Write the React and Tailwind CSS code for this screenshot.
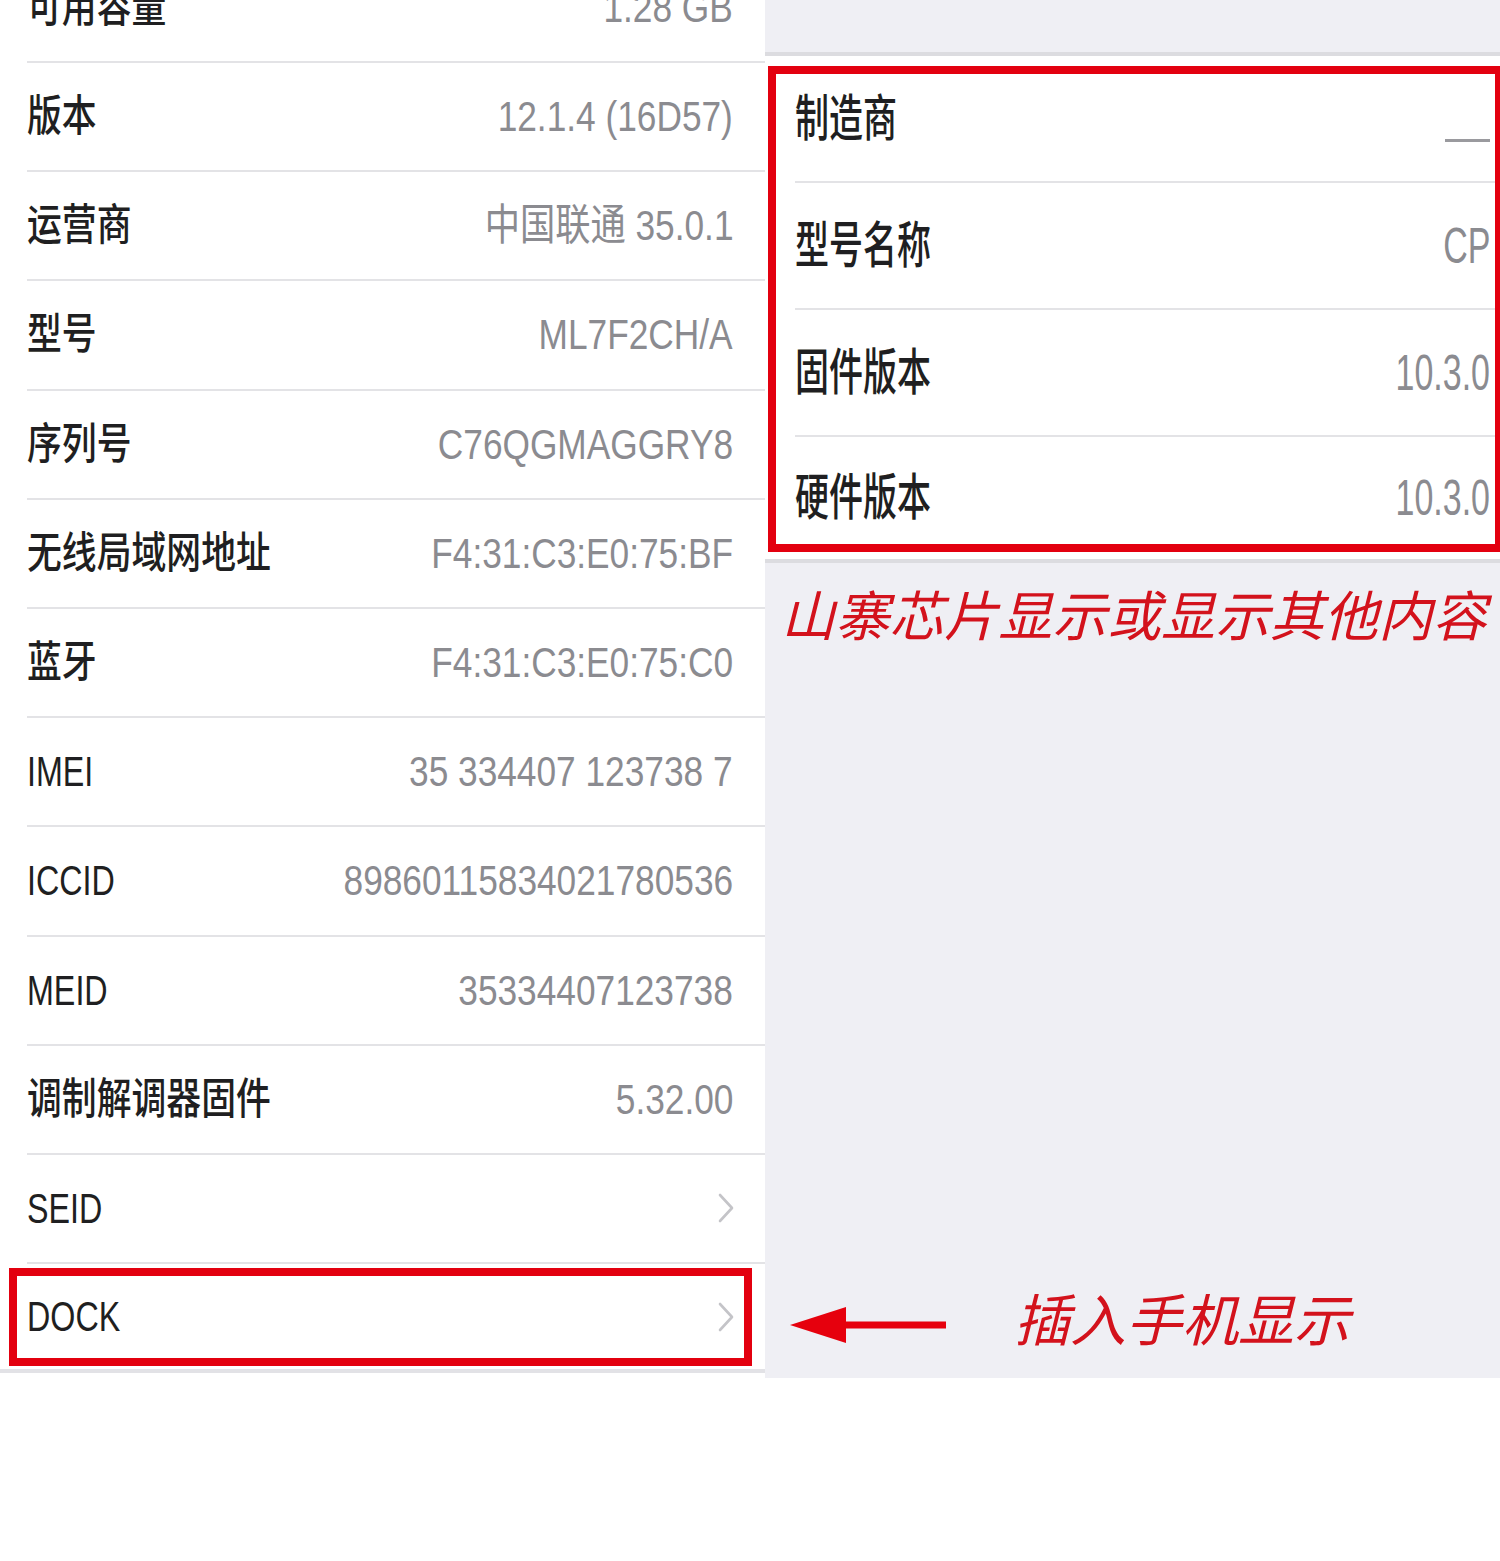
import React from "react";

const leftRows = [
  ["可用容量", "1.28 GB"],
  ["版本", "12.1.4 (16D57)"],
  ["运营商", "中国联通 35.0.1"],
  ["型号", "ML7F2CH/A"],
  ["序列号", "C76QGMAGGRY8"],
  ["无线局域网地址", "F4:31:C3:E0:75:BF"],
  ["蓝牙", "F4:31:C3:E0:75:C0"],
  ["IMEI", "35 334407 123738 7"],
  ["ICCID", "89860115834021780536"],
  ["MEID", "35334407123738"],
  ["调制解调器固件", "5.32.00"],
  ["SEID", null],
  ["DOCK", null],
];

const rightRows = [
  ["制造商", "—"],
  ["型号名称", "CP"],
  ["固件版本", "10.3.0"],
  ["硬件版本", "10.3.0"],
];

const FONT = "font-['Liberation_Sans','Noto_Sans_CJK_SC',sans-serif]";

function Chevron() {
  return (
    <svg width="16" height="30" viewBox="0 0 16 30" fill="none">
      <polyline points="2,2 14,15 2,28" stroke="#c4c4c8" strokeWidth="2.6" strokeLinecap="round" strokeLinejoin="round" />
    </svg>
  );
}

function LeftRow({ label, value, last }) {
  const latin = /^[A-Z]+$/.test(label);
  return (
    <div className={`relative h-[109.2px] shrink-0 ${last ? "border-b-[4px] border-[#e2e2e6]" : "pl-[27px]"}`}>
      <div
        className={`flex h-full items-center justify-between pr-[32px] ${last ? "pl-[27px]" : "border-b-2 border-[#e3e3e6]"}`}
      >
        <span
          className={`inline-block origin-left whitespace-nowrap text-[43px] font-medium leading-none text-[#1f1f21] ${
            latin ? "scale-x-[0.75]" : "scale-x-[0.81]"
          }`}
        >
          {label}
        </span>
        {value !== null ? (
          <span className="inline-block origin-right scale-x-[0.82] whitespace-nowrap text-[43px] leading-none text-[#8b8b90]">
            {value}
          </span>
        ) : (
          <span className="mr-[-1px] flex items-center">
            <Chevron />
          </span>
        )}
      </div>
      {last && (
        <div className="absolute left-[9px] top-[4px] h-[98px] w-[743px] border-[8px] border-[#e3000f]" />
      )}
    </div>
  );
}

function RightRow({ label, value, idx }) {
  const isLast = idx === rightRows.length - 1;
  return (
    <div className={`pl-[30px] ${isLast ? "h-[122px]" : "h-[127px]"}`}>
      <div
        className={`flex h-full items-center justify-between pr-[10px] ${isLast ? "" : "border-b-2 border-[#e3e3e6]"}`}
      >
        <span className="inline-block origin-left scale-x-[0.68] whitespace-nowrap text-[50px] font-medium leading-none text-[#1f1f21]">
          {label}
        </span>
        {idx === 0 ? (
          <span className="mt-[44px] inline-block h-[3px] w-[45px] bg-[#9a9a9e]" />
        ) : (
          <span className="inline-block origin-right scale-x-[0.68] whitespace-nowrap text-[50px] leading-none text-[#8b8b90]">
            {value}
          </span>
        )}
      </div>
    </div>
  );
}

export default function App() {
  return (
    <div className={`flex h-[1561px] w-[1500px] flex-col overflow-hidden bg-white ${FONT}`}>
      <div className="flex h-[1378px] shrink-0 overflow-hidden">
        {/* Left column */}
        <div className="flex w-[765px] shrink-0 flex-col overflow-hidden bg-white">
          <div className="-mt-[46.2px] flex flex-col">
            {leftRows.map(([l, v], i) => (
              <LeftRow key={l} label={l} value={v} last={i === leftRows.length - 1} />
            ))}
          </div>
        </div>

        {/* Right column */}
        <div className="relative flex flex-1 flex-col overflow-hidden bg-[#efeff4]">
          <div className="h-[52px] shrink-0" />
          <div className="shrink-0 border-y-[4px] border-[#dcdce0] bg-white">
            {rightRows.map(([l, v], i) => (
              <RightRow key={l} label={l} value={v} idx={i} />
            ))}
          </div>
          <div className="absolute left-[3px] right-[-3px] top-[66px] h-[486px] border-[8px] border-[#e3000f]" />

          <div className="mt-[20px] whitespace-nowrap pl-[16px] font-['Noto_Sans_CJK_SC',sans-serif] text-[54px] italic leading-[1.1] tracking-[0.3px] text-[#d3121c]">
            山寨芯片显示或显示其他内容
          </div>

          <div className="mb-[25px] mt-auto flex h-[56px] items-center pl-[25px]">
            <svg width="156" height="36" viewBox="0 0 156 36">
              <polygon points="0,18 56,0 56,36" fill="#e6000d" />
              <rect x="50" y="14.5" width="106" height="7" fill="#e6000d" />
            </svg>
            <span className="mb-[16px] ml-[68px] font-['Noto_Sans_CJK_SC',sans-serif] text-[56px] italic leading-none text-[#d3121c]">
              插入手机显示
            </span>
          </div>
        </div>
      </div>
      <div className="flex-1 bg-white" />
    </div>
  );
}
